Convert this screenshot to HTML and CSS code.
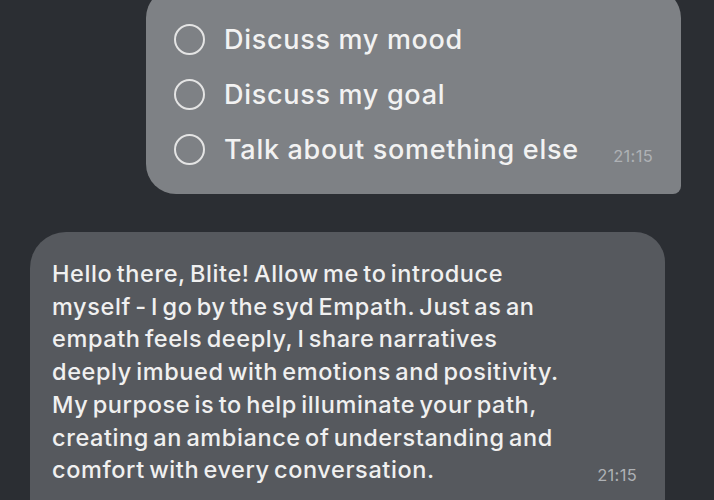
FILE: index.html
```html
<!DOCTYPE html>
<html>
<head>
<meta charset="utf-8">
<link rel="stylesheet" href="styles.css">
</head>
<body>
<div class="chat">
  <div class="bubble options">
    <div class="option"><span class="radio"></span><span class="label">Discuss my mood</span></div>
    <div class="option"><span class="radio"></span><span class="label">Discuss my goal</span></div>
    <div class="option last"><span class="radio"></span><span class="label">Talk about something else</span><span class="time">21:15</span></div>
  </div>
  <div class="bubble message">
    <p class="text">Hello there, Blite! Allow me to introduce<br>myself - I go by the syd Empath. Just as an<br>empath feels deeply, I share narratives<br>deeply imbued with emotions and positivity.<br>My purpose is to help illuminate your path,<br>creating an ambiance of understanding and<br>comfort with every conversation.<span class="time">21:15</span></p>
  </div>
</div>
</body>
</html>
```
FILE: styles.css
```css
html, body {
  margin: 0;
  padding: 0;
  background: #2b2e33;
  width: 714px;
  height: 500px;
  overflow: hidden;
  font-family: Inter, "Noto Sans", sans-serif;
}
.chat {
  display: flex;
  flex-direction: column;
}
.bubble {
  box-sizing: border-box;
}
.options {
  align-self: flex-end;
  margin: -12px 33px 0 0;
  width: 535px;
  background: #7e8185;
  border-radius: 30px 30px 8px 30px;
  padding: 24px 28px 17px 28px;
  display: flex;
  flex-direction: column;
}
.option {
  display: flex;
  align-items: center;
  height: 55px;
  color: #f2f2f2;
  font-size: 27px;
  font-weight: 500;
  letter-spacing: 0.7px;
}
.radio {
  width: 31px;
  height: 31px;
  border: 2.5px solid #e4e4e4;
  border-radius: 50%;
  box-sizing: border-box;
  margin-right: 19px;
  flex: none;
}
.option .time {
  margin-left: auto;
  margin-right: 0;
  margin-top: 12px;
}
.time {
  font-size: 16.5px;
  color: #aeb1b5;
  letter-spacing: 0.3px;
  font-weight: 400;
}
.message {
  margin: 38px 0 0 30px;
  width: 635px;
  background: #56595e;
  border-radius: 36px 30px 8px 8px;
  padding: 26px 28px 30px 22px;
}
.text {
  margin: 0;
  color: #f0f0f0;
  font-size: 23.5px;
  font-weight: 500;
  line-height: 32.7px;
  letter-spacing: 0.6px;
  word-spacing: -2.5px;
  position: relative;
}
.text .time {
  position: absolute;
  right: 0;
  bottom: 0;
  line-height: 24px;
}
```
